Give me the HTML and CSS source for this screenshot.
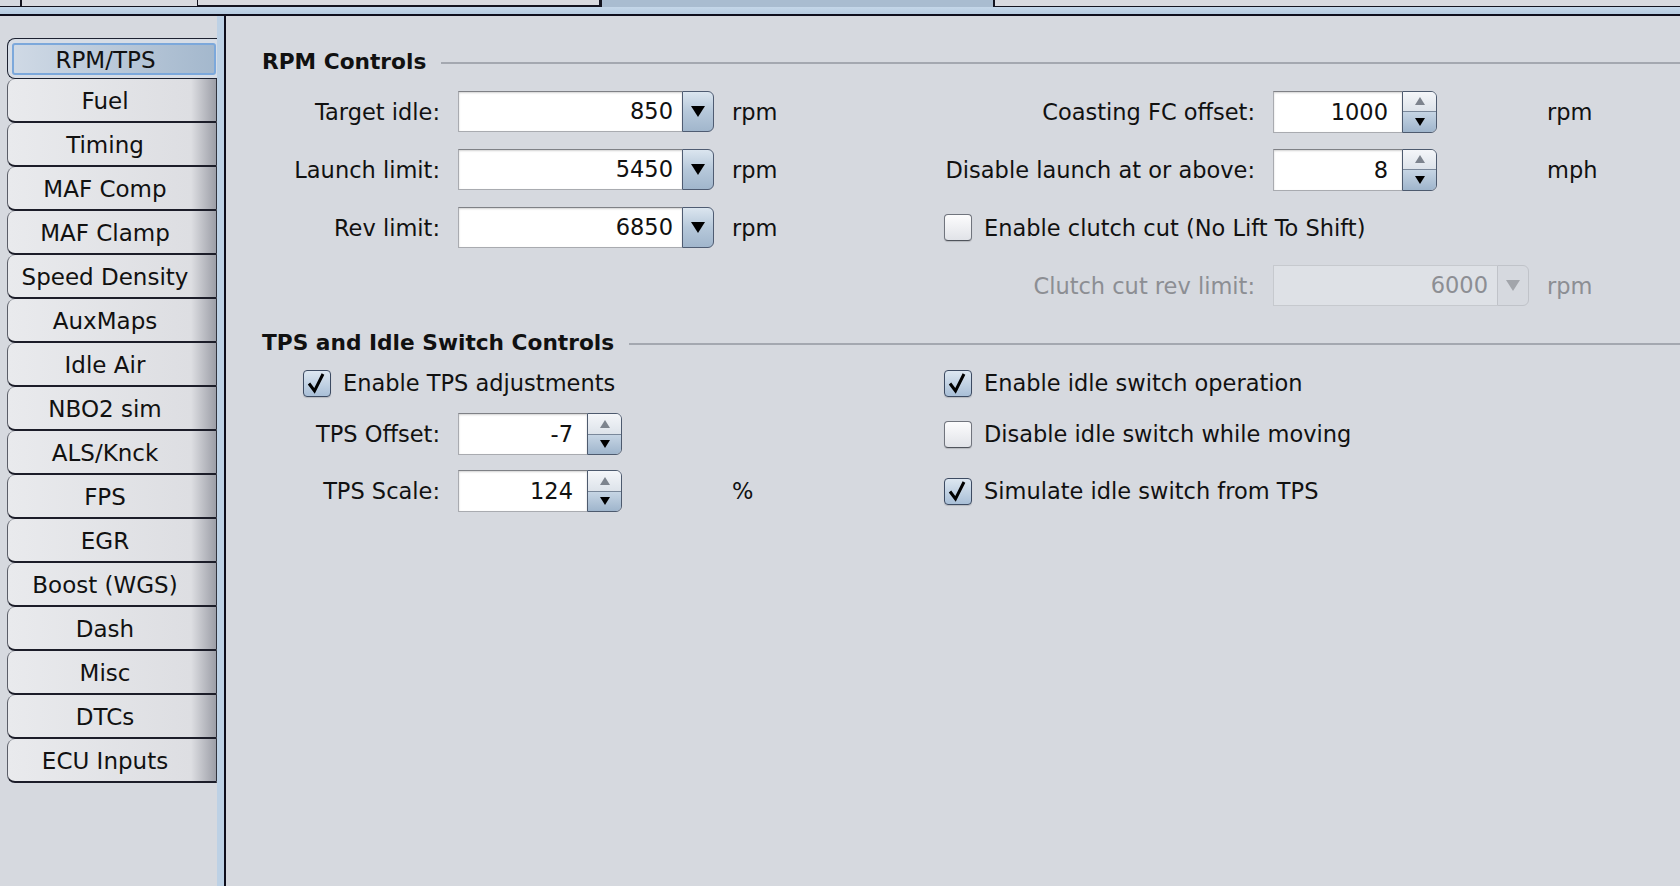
FILE: index.html
```html
<!DOCTYPE html>
<html lang="en">

<head>
    <meta charset="UTF-8">
    <title>RPM/TPS</title>
    <link rel="stylesheet" href="styles.css">
</head>

<body>
    <div class="app">
        <div class="top-tabs">
            <div class="top-tab lead"></div>
            <div class="top-tab t1"></div>
            <div class="top-tab t2"></div>
            <div class="top-tab active"></div>
            <div class="top-tab rest"></div>
        </div>
        <div class="band"></div>

        <div class="main">
            <nav class="side-tabs">
                <div class="stab active"><span>RPM/TPS</span></div>
                <div class="stab"><span>Fuel</span></div>
                <div class="stab"><span>Timing</span></div>
                <div class="stab"><span>MAF Comp</span></div>
                <div class="stab"><span>MAF Clamp</span></div>
                <div class="stab"><span>Speed Density</span></div>
                <div class="stab"><span>AuxMaps</span></div>
                <div class="stab"><span>Idle Air</span></div>
                <div class="stab"><span>NBO2 sim</span></div>
                <div class="stab"><span>ALS/Knck</span></div>
                <div class="stab"><span>FPS</span></div>
                <div class="stab"><span>EGR</span></div>
                <div class="stab"><span>Boost (WGS)</span></div>
                <div class="stab"><span>Dash</span></div>
                <div class="stab"><span>Misc</span></div>
                <div class="stab"><span>DTCs</span></div>
                <div class="stab"><span>ECU Inputs</span></div>
            </nav>
            <div class="side-edge"></div>

            <section class="panel">
                <div class="group">
                    <h2 class="group-title">RPM Controls</h2>
                    <div class="form rpm">
                        <span class="label">Target idle:</span>
                        <div class="combo">
                            <span class="value">850</span>
                            <span class="arrow"><svg width="14" height="11" viewBox="0 0 14 11"><path d="M0 0H14L7 11Z" /></svg></span>
                        </div>
                        <span class="unit">rpm</span>
                        <span class="label">Coasting FC offset:</span>
                        <div class="spin">
                            <span class="value">1000</span>
                            <span class="btns">
                                <span class="up"><svg width="10" height="8" viewBox="0 0 10 8"><path d="M0 8H10L5 0Z" /></svg></span>
                                <span class="down"><svg width="10" height="8" viewBox="0 0 10 8"><path d="M0 0H10L5 8Z" /></svg></span>
                            </span>
                        </div>
                        <span class="unit">rpm</span>

                        <span class="label">Launch limit:</span>
                        <div class="combo">
                            <span class="value">5450</span>
                            <span class="arrow"><svg width="14" height="11" viewBox="0 0 14 11"><path d="M0 0H14L7 11Z" /></svg></span>
                        </div>
                        <span class="unit">rpm</span>
                        <span class="label">Disable launch at or above:</span>
                        <div class="spin">
                            <span class="value">8</span>
                            <span class="btns">
                                <span class="up"><svg width="10" height="8" viewBox="0 0 10 8"><path d="M0 8H10L5 0Z" /></svg></span>
                                <span class="down"><svg width="10" height="8" viewBox="0 0 10 8"><path d="M0 0H10L5 8Z" /></svg></span>
                            </span>
                        </div>
                        <span class="unit">mph</span>

                        <span class="label">Rev limit:</span>
                        <div class="combo">
                            <span class="value">6850</span>
                            <span class="arrow"><svg width="14" height="11" viewBox="0 0 14 11"><path d="M0 0H14L7 11Z" /></svg></span>
                        </div>
                        <span class="unit">rpm</span>
                        <label class="check right-col">
                            <span class="box"></span>Enable clutch cut (No Lift To Shift)
                        </label>

                        <span class="label off right-label">Clutch cut rev limit:</span>
                        <div class="combo off">
                            <span class="value">6000</span>
                            <span class="arrow"><svg width="14" height="11" viewBox="0 0 14 11"><path d="M0 0H14L7 11Z" /></svg></span>
                        </div>
                        <span class="unit off">rpm</span>
                    </div>
                </div>

                <div class="group tps-group">
                    <h2 class="group-title">TPS and Idle Switch Controls</h2>
                    <div class="form tps">
                        <label class="check on left-col">
                            <span class="box"><svg width="22" height="22" viewBox="0 0 22 22"><path d="M3 11.5L8.5 19L17 2" /></svg></span>Enable TPS adjustments
                        </label>
                        <label class="check on right-col">
                            <span class="box"><svg width="22" height="22" viewBox="0 0 22 22"><path d="M3 11.5L8.5 19L17 2" /></svg></span>Enable idle switch operation
                        </label>

                        <span class="label">TPS Offset:</span>
                        <div class="spin">
                            <span class="value">-7</span>
                            <span class="btns">
                                <span class="up"><svg width="10" height="8" viewBox="0 0 10 8"><path d="M0 8H10L5 0Z" /></svg></span>
                                <span class="down"><svg width="10" height="8" viewBox="0 0 10 8"><path d="M0 0H10L5 8Z" /></svg></span>
                            </span>
                        </div>
                        <label class="check right-col">
                            <span class="box"></span>Disable idle switch while moving
                        </label>

                        <span class="label">TPS Scale:</span>
                        <div class="spin">
                            <span class="value">124</span>
                            <span class="btns">
                                <span class="up"><svg width="10" height="8" viewBox="0 0 10 8"><path d="M0 8H10L5 0Z" /></svg></span>
                                <span class="down"><svg width="10" height="8" viewBox="0 0 10 8"><path d="M0 0H10L5 8Z" /></svg></span>
                            </span>
                        </div>
                        <span class="unit">%</span>
                        <label class="check on right-col">
                            <span class="box"><svg width="22" height="22" viewBox="0 0 22 22"><path d="M3 11.5L8.5 19L17 2" /></svg></span>Simulate idle switch from TPS
                        </label>
                    </div>
                </div>
            </section>
        </div>
    </div>
</body>

</html>
```

FILE: styles.css
```css
* {
    box-sizing: border-box;
}

html,
body {
    margin: 0;
    height: 100%;
}

body {
    font-family: "DejaVu Sans", "Noto Sans", sans-serif;
    font-size: 22.5px;
    color: #111;
    background: #d6d9df;
    overflow: hidden;
}

.app {
    display: flex;
    flex-direction: column;
    height: 886px;
}

/* cut-off tab strip at the very top */
.top-tabs {
    display: flex;
    height: 7px;
    flex: none;
}

.top-tab {
    background: #d9dadf;
    border-bottom: 1px solid #14141f;
}

.top-tab.lead {
    width: 20px;
    background: #d6d9df;
}

.top-tab.t1 {
    width: 177px;
    border-left: 2px solid #14141f;
}

.top-tab.t2 {
    width: 405px;
    border-left: 1px solid #14141f;
    border-right: 3px solid #14141f;
    border-bottom-width: 2px;
}

.top-tab.active {
    width: 391px;
    background: #a9bcd0;
    border-bottom: none;
}

.top-tab.rest {
    flex: 1;
    border-left: 2px solid #14141f;
}

.band {
    height: 9px;
    flex: none;
    background: linear-gradient(#c5d7e9, #b6cbe0);
    border-bottom: 2px solid #0e0e1c;
}

.main {
    flex: 1;
    display: flex;
    min-height: 0;
}

/* left tab column */
.side-tabs {
    width: 217px;
    flex: none;
    padding: 22px 0 0 7px;
    display: flex;
    flex-direction: column;
}

.stab {
    height: 44px;
    flex: none;
    display: flex;
    align-items: center;
    justify-content: center;
    padding: 2px 14px 0 0;
    font-size: 23px;
    border-left: 1px solid #5b5e68;
    border-right: 1px solid #30323c;
    border-bottom: 2px solid #1c1d29;
    border-radius: 8px 0 0 8px;
    background: linear-gradient(to right, #e9eaed 0%, #dddee2 88%, #9c9ea7 100%);
}

.stab.active {
    position: relative;
    height: 41px;
    border: 1.5px solid #1d2231;
    border-right: none;
    background: #d7dde6;
}

.stab.active::before {
    content: "";
    position: absolute;
    inset: 4px 1px 3px 4px;
    border: 2px solid #7ca8db;
    border-radius: 3px;
    background: linear-gradient(to right, #cfd9e5, #a4b8cd);
}

.stab.active span {
    position: relative;
}

.side-edge {
    width: 9px;
    flex: none;
    background: #bdd1e5;
    border-right: 2px solid #0e0e1c;
}

/* content panel */
.panel {
    flex: 1;
    padding: 33px 0 0 36px;
}

.group-title {
    display: flex;
    align-items: center;
    gap: 15px;
    margin: 0;
    font-size: 21.7px;
    font-weight: bold;
    line-height: 26px;
}

.group-title::after {
    content: "";
    flex: 1;
    height: 2px;
    margin-top: 2px;
    background: #a4a8b0;
}

.tps-group {
    margin-top: 24px;
}

.form {
    display: grid;
    grid-template-columns: 178px 256px 194px 311px 256px auto;
    column-gap: 18px;
    align-items: center;
    margin-top: 16px;
}

.form.rpm {
    grid-template-rows: repeat(4, 41px);
    row-gap: 17px;
}

.form.tps {
    grid-template-rows: 30px 42px 42px;
    row-gap: 15px;
    margin-top: 12px;
}

.label {
    text-align: right;
    white-space: nowrap;
}

.right-label {
    grid-column: 4;
}

.off {
    color: #8c8e93;
}

.left-col {
    grid-column: 1 / span 3;
    padding-left: 41px;
}

.right-col {
    grid-column: 4 / span 3;
}

/* combo box */
.combo {
    display: flex;
    width: 256px;
    height: 41px;
}

.value {
    flex: 1;
    background: #fff;
    border: 1px solid #a9abb0;
    border-top-color: #7f8186;
    border-right: none;
    box-shadow: inset 0 1px 2px rgba(0, 0, 0, 0.18);
    text-align: right;
    line-height: 39px;
    padding-right: 9px;
}

.arrow {
    width: 32px;
    display: flex;
    align-items: center;
    justify-content: center;
    border: 1px solid #4f5c72;
    border-radius: 0 6px 6px 0;
    background: linear-gradient(#dbe5ef, #b6c8da 50%, #a1b6cc);
}

.arrow svg {
    fill: #000;
}

.combo.off .value {
    background: #dee1e6;
    border-color: #c6c9ce;
    box-shadow: none;
    color: #8c8e93;
}

.combo.off .arrow {
    background: #d6d9df;
    border-color: #c0c3c9;
}

.combo.off .arrow svg {
    fill: #a2a5ab;
}

/* spinner */
.spin {
    display: flex;
    width: 164px;
    height: 42px;
}

.spin .value {
    padding-right: 14px;
    line-height: 40px;
}

.btns {
    width: 35px;
    display: flex;
    flex-direction: column;
    border: 1px solid #4d5a6e;
    border-radius: 0 6px 6px 0;
    overflow: hidden;
}

.btns span {
    flex: 1;
    display: flex;
    align-items: center;
    justify-content: center;
}

.up {
    background: linear-gradient(#f4f6f9, #dde3ea);
    border-bottom: 1px solid #7a889a;
}

.up svg {
    fill: #7d848e;
}

.down {
    background: linear-gradient(#c6d5e4, #9fb5cc);
}

.down svg {
    fill: #000;
}

/* check boxes */
.check {
    display: flex;
    align-items: center;
    gap: 12px;
    white-space: nowrap;
}

.box {
    width: 28px;
    height: 27px;
    flex: none;
    display: flex;
    align-items: center;
    justify-content: center;
    border: 1px solid #70747d;
    border-bottom-color: #50545c;
    border-radius: 4px;
    background: linear-gradient(#fcfcfd, #e1e3e8);
    box-shadow: 0 1px 1px rgba(0, 0, 0, 0.15);
}

.check.on .box {
    border-color: #3d4b62;
    background: linear-gradient(#dde7f1, #a9bfd7);
}

.box svg {
    fill: none;
    stroke: #000;
    stroke-width: 3;
    stroke-linejoin: miter;
}
```
